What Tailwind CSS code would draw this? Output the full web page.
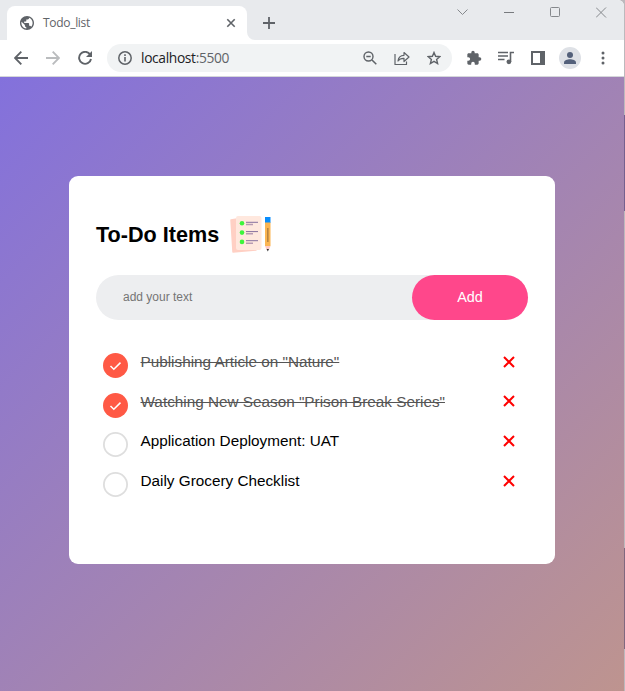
<!DOCTYPE html>
<html lang="en">
<head>
<meta charset="utf-8">
<title>Todo_list</title>
<script src="https://cdn.jsdelivr.net/npm/@tailwindcss/browser@4"></script>
</head>
<body class="w-[625px] h-[691px] overflow-hidden bg-[#bcb9bd] font-['Liberation_Sans',Arial,sans-serif]">
<div class="relative flex flex-col w-[624px] h-[691px] bg-white rounded-tr-[6px] overflow-hidden">
  <!-- Tab strip -->
  <header class="flex items-start h-10 shrink-0 bg-[#e8eaed]">
    <div class="flex items-center w-[240px] h-[34px] mt-[6px] ml-[7px] pl-[13px] pr-[11px] bg-white rounded-t-[8px]">
      <svg class="size-[14px]" viewBox="2 2 20 20"><path fill="#5f6368" d="M12 2C6.480 2 2 6.480 2 12s4.480 10 10 10 10-4.480 10-10S17.520 2 12 2zm-1 17.930c-3.950-.49-7-3.850-7-7.930 0-.62.080-1.210.210-1.790L9 15v1c0 1.100.9 2 2 2v1.930zm6.900-2.540c-.26-.81-1-1.390-1.900-1.390h-1v-3c0-.55-.45-1-1-1H8v-2h2c.55 0 1-.45 1-1V7h2c1.100 0 2-.9 2-2v-.41c2.930 1.190 5 4.060 5 7.410 0 2.080-.8 3.970-2.100 5.390z"/></svg>
      <span class="ml-[9px] mt-[-1px] text-[12px] leading-4 text-[#5f6368] font-['Open_Sans','Noto_Sans',sans-serif] tracking-[-0.3px]">Todo_list</span>
      <svg class="ml-auto size-[10px]" viewBox="0 0 10 10"><path d="M1.300 1.300l7.400 7.400M8.700 1.300L1.300 8.700" stroke="#5f6368" stroke-width="1.600"/></svg>
    </div>
    <svg class="self-end size-[8px]" viewBox="0 0 8 8"><path d="M0 0v8h8a8 8 0 0 1-8-8z" fill="#fff"/></svg>
    <svg class="ml-[8px] mt-[17px] size-[12px]" viewBox="0 0 12 12"><path d="M6 0v12M0 6h12" stroke="#5f6368" stroke-width="1.800"/></svg>
    <div class="ml-auto flex items-center gap-[35px] mr-[17px] mt-[6px] h-3">
      <svg class="size-[12px]" viewBox="0 0 12 12"><path d="M1.500 3.500l5 5 5-5" fill="none" stroke="#85888c"/></svg>
      <svg class="size-[10px] ml-[1px]" viewBox="0 0 10 10"><path d="M0 5.500h10" stroke="#777a7e"/></svg>
      <svg class="size-[11px] ml-[1px]" viewBox="0 0 11 11"><rect x=".5" y=".5" width="9" height="9" rx="1" fill="none" stroke="#85888c"/></svg>
      <svg class="size-[11px]" viewBox="0 0 11 11"><path d="M0 .5l10 10M10 .5l-10 10" stroke="#85888c"/></svg>
    </div>
  </header>
  <!-- Toolbar -->
  <nav class="relative flex items-center h-[37px] shrink-0 pb-px border-b border-[#d5d7da] bg-white">
    <svg class="ml-[14px] size-[14px]" viewBox="0 0 14 14"><path d="M14 7H1M7.300.7L1 7l6.300 6.300" fill="none" stroke="#5f6368" stroke-width="1.900"/></svg>
    <svg class="ml-[18px] size-[14px]" viewBox="0 0 14 14"><path d="M0 7h13M6.700.7L13 7l-6.300 6.300" fill="none" stroke="#babcbe" stroke-width="1.900"/></svg>
    <svg class="ml-[18px] size-[14px]" viewBox="0 0 14 14"><path d="M12.100 3.500A6 6 0 1 0 13 8" fill="none" stroke="#5f6368" stroke-width="1.900"/><path d="M14 0v6H8z" fill="#5f6368"/></svg>
    <div class="flex items-center w-[345px] h-[28px] ml-[15px] pl-[11px] pr-[11px] bg-[#f1f3f4] rounded-full">
      <svg class="size-[14px]" viewBox="0 0 14 14"><circle cx="7" cy="7" r="6.200" fill="none" stroke="#5f6368" stroke-width="1.500"/><path d="M7 6v4.500M7 3.300v1.600" stroke="#5f6368" stroke-width="1.600"/></svg>
      <span class="ml-[9px] text-[13.800px] leading-5 text-[#5f6368] font-['Open_Sans','Noto_Sans',sans-serif] tracking-[-0.35px]"><span class="text-[#202124]">localhost</span>:5500</span>
      <div class="ml-auto flex items-center gap-[17px]">
        <svg class="size-[14px]" viewBox="0 0 14 14"><circle cx="5.500" cy="5.500" r="4.500" fill="none" stroke="#5f6368" stroke-width="1.400"/><path d="M3.300 5.500h4.400M9 9l4.300 4.300" stroke="#5f6368" stroke-width="1.500"/></svg>
        <svg class="size-[16px]" viewBox="0 0 16 16"><path d="M1 4v10.500h11.500V11.500M4 11c.4-3.600 2.500-5.600 6-5.700V2.500L15 7l-5 4.500V8.300c-2.800-.1-4.700.8-6 2.700z" fill="none" stroke="#5f6368" stroke-width="1.200" stroke-linejoin="round"/></svg>
        <svg class="size-[14px]" viewBox="0 0 14 14"><path d="M7 1.500l1.600 3.800 4.200.4-3.200 2.700 1 4.100L7 10.300l-3.600 2.200 1-4.100L1.200 5.700l4.200-.4z" fill="none" stroke="#5f6368" stroke-width="1.400"/></svg>
      </div>
    </div>
    <div class="flex items-center ml-[14px]">
      <svg class="size-[16px]" viewBox="0 0 24 24"><path fill="#5f6368" d="M20.500 11H19V7c0-1.100-.9-2-2-2h-4V3.500a2.500 2.500 0 0 0-5 0V5H4c-1.100 0-2 .9-2 2v3.800h1.500a2.700 2.700 0 0 1 0 5.400H2V20c0 1.100.9 2 2 2h3.800v-1.500a2.700 2.700 0 0 1 5.400 0V22H17c1.100 0 2-.9 2-2v-4h1.500a2.500 2.500 0 0 0 0-5z"/></svg>
      <svg class="ml-[16px] size-[16px]" viewBox="0 0 16 16"><path d="M0 2.500h10M0 6h10M0 9.500h6.500M12.500 12V2.500H16" fill="none" stroke="#5f6368" stroke-width="1.600"/><circle cx="10.900" cy="11.800" r="2.400" fill="#5f6368"/></svg>
      <svg class="ml-[17px] size-[14px]" viewBox="0 0 14 14"><path fill="#5f6368" fill-rule="evenodd" d="M0 0h14v14H0zM2 2v10h7V2z"/></svg>
      <div class="ml-[14px] size-[22px] rounded-full bg-[#dee1e6] flex items-center justify-center"><svg class="size-[12px]" viewBox="0 0 12 12"><circle cx="6" cy="3" r="3" fill="#53607a"/><path d="M0 12v-1.500C0 8.500 3.500 7.300 6 7.300s6 1.200 6 3.200V12z" fill="#53607a"/></svg></div>
      <svg class="ml-[20px] w-[4px] h-[14px]" viewBox="0 0 4 14"><g fill="#5f6368"><circle cx="2" cy="2" r="1.500"/><circle cx="2" cy="7" r="1.500"/><circle cx="2" cy="12" r="1.500"/></g></svg>
    </div>
  </nav>
  <!-- Page -->
  <main class="grow pt-[99px] pl-[69px] bg-[linear-gradient(135deg,#8371dc,#be948f)]">
    <section class="w-[486px] h-[388px] bg-white rounded-[9px] pt-[36px] pl-[27px] pr-[27px]">
      <h1 class="flex items-center h-[45px] text-[21.600px] font-bold text-black">
        <span class="mt-[2px]">To-Do Items</span>
        <svg class="ml-[11px] mt-[-2px] w-[43px] h-[40px]" viewBox="0 0 43 40">
          <path d="M1 6l6-1v29l19 1v1L3 38z" fill="#ffd0c4" stroke="#ffd0c4" stroke-width="1.500" stroke-linejoin="round"/>
          <rect x="6" y="2" width="25.500" height="34" rx="2" fill="#ffe8de"/>
          <g fill="#3cf53c"><circle cx="12" cy="9.300" r="2.300"/><circle cx="12" cy="18.600" r="2.300"/><circle cx="12" cy="27.900" r="2.300"/></g>
          <path d="M16 8.300h12M16 17.600h12M16 26.700h12" stroke="#86709e" stroke-width="1"/>
          <path d="M16 10.500h7M16 19.800h7M16 29.200h7" stroke="#b79bb3" stroke-width="1.400"/>
          <path d="M35 3h5.500v6H35z" fill="#0a8dfc"/><path d="M35 8.500h5.500V32H35z" fill="#fbb552"/><path d="M37.800 14v14" stroke="#b88340" stroke-width="1.600"/><path d="M35 32h5.500l-1.600 4h-2.300z" fill="#ffc9c4"/><path d="M36.600 35h2.400l-1.200 2.600z" fill="#333"/>
        </svg>
      </h1>
      <form class="flex w-[432px] h-[45px] mt-[18px] bg-[#edeef0] rounded-full">
        <input class="grow min-w-0 pl-[27px] pb-[2px] text-[12px] bg-transparent outline-none placeholder:text-[#757575]" placeholder="add your text">
        <button type="button" class="w-[116px] h-[45px] rounded-full bg-[#ff478b] text-white text-[14.400px]">Add</button>
      </form>
      <ul class="mt-[22px] text-[15.300px] leading-[18px] text-black">
        <li class="flex h-[40px] pl-[7px] pr-[13px]">
          <svg class="mt-[11px] size-[25px]" viewBox="0 0 25 25"><circle cx="12.500" cy="12.500" r="12.500" fill="#ff5945"/><path d="M7.500 13l3.300 3.200 6.700-6.600" fill="none" stroke="#fff" stroke-width="1.500"/></svg>
          <span class="ml-[12.500px] mt-[11px] text-[#555] line-through">Publishing Article on "Nature"</span>
          <svg class="ml-auto mt-[14px] size-[12px]" viewBox="0 0 12 12"><path d="M1 1l10 10M11 1L1 11" stroke="#f00" stroke-width="2"/></svg>
        </li>
        <li class="flex h-[39px] pl-[7px] pr-[13px]">
          <svg class="mt-[11px] size-[25px]" viewBox="0 0 25 25"><circle cx="12.500" cy="12.500" r="12.500" fill="#ff5945"/><path d="M7.500 13l3.300 3.200 6.700-6.600" fill="none" stroke="#fff" stroke-width="1.500"/></svg>
          <span class="ml-[12.500px] mt-[11px] text-[#555] line-through">Watching New Season "Prison Break Series"</span>
          <svg class="ml-auto mt-[13px] size-[12px]" viewBox="0 0 12 12"><path d="M1 1l10 10M11 1L1 11" stroke="#f00" stroke-width="2"/></svg>
        </li>
        <li class="flex h-[40px] pl-[7px] pr-[13px]">
          <svg class="mt-[11px] size-[25px]" viewBox="0 0 25 25"><circle cx="12.500" cy="12.500" r="11.600" fill="#fff" stroke="#dedede" stroke-width="1.800"/></svg>
          <span class="ml-[12.500px] mt-[11px]">Application Deployment: UAT</span>
          <svg class="ml-auto mt-[14px] size-[12px]" viewBox="0 0 12 12"><path d="M1 1l10 10M11 1L1 11" stroke="#f00" stroke-width="2"/></svg>
        </li>
        <li class="flex h-[40px] pl-[7px] pr-[13px]">
          <svg class="mt-[11px] size-[25px]" viewBox="0 0 25 25"><circle cx="12.500" cy="12.500" r="11.600" fill="#fff" stroke="#dedede" stroke-width="1.800"/></svg>
          <span class="ml-[12.500px] mt-[11px]">Daily Grocery Checklist</span>
          <svg class="ml-auto mt-[14px] size-[12px]" viewBox="0 0 12 12"><path d="M1 1l10 10M11 1L1 11" stroke="#f00" stroke-width="2"/></svg>
        </li>
      </ul>
    </section>
  </main>
</div>
<!-- Sliver of the window behind -->
<div class="absolute left-[624px] top-[115px] w-px h-[96px] bg-[#75608f]"></div>
<div class="absolute left-[624px] top-[548px] w-px h-[101px] bg-[#80687f]"></div>
</body>
</html>
